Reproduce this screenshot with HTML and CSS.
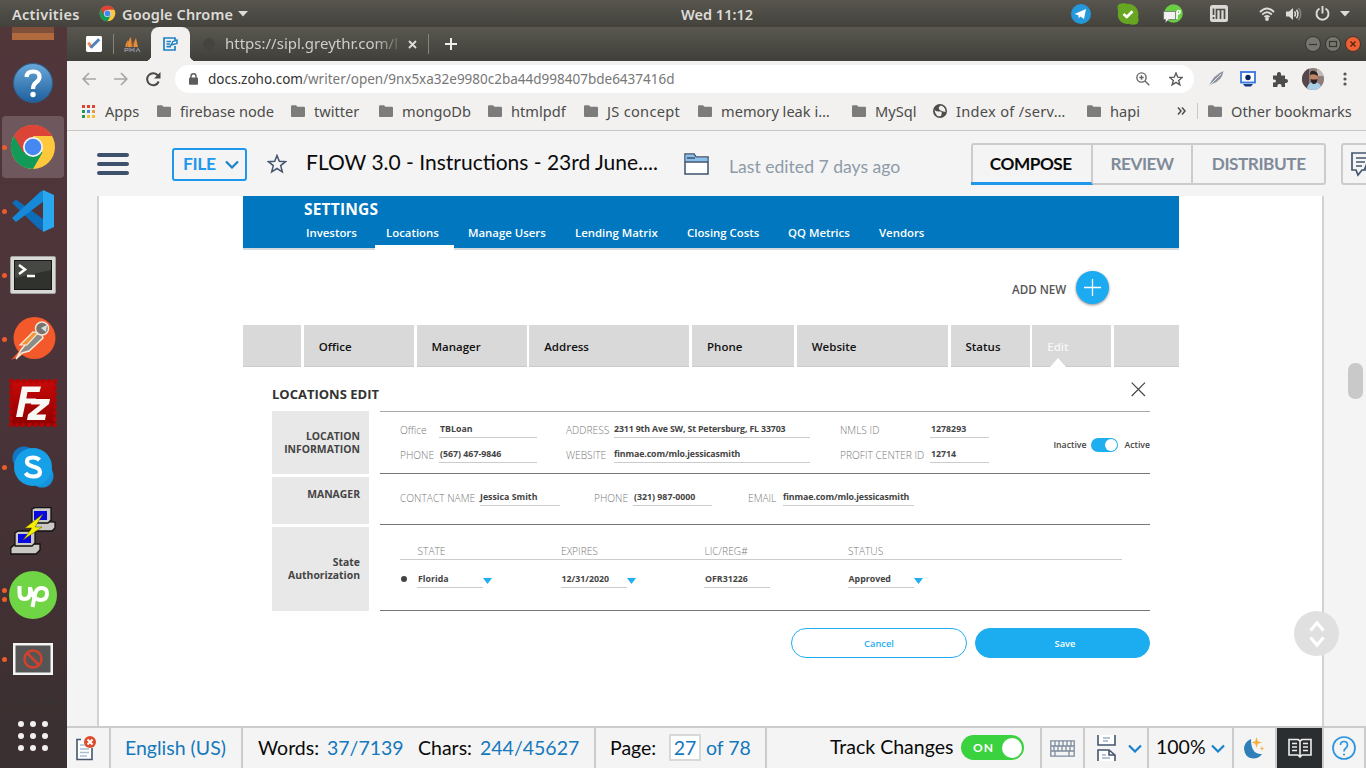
FILE: index.html
```html
<!DOCTYPE html>
<html lang="en">
<head>
<meta charset="utf-8">
<title>FLOW 3.0 - Instructions</title>
<link rel="stylesheet" href="styles.css">
</head>
<body>
<svg class="defs" width="0" height="0">
  <symbol id="folder" viewBox="0 0 14 12"><path d="M0 1.5Q0 .3 1.2.3H5L6.5 1.8H13Q14 1.8 14 2.8V11Q14 12 13 12H1Q0 12 0 11Z" fill="#7c7c7a"/></symbol>
  <symbol id="chev" viewBox="0 0 14 9"><path d="M1 1.5 7 7.5 13 1.5" fill="none" stroke="#1b82c9" stroke-width="2.2"/></symbol>
  <symbol id="chrome" viewBox="0 0 48 48">
    <circle cx="24" cy="24" r="22" fill="#fdc83b"/>
    <path d="M24 24 4.9 13A22 22 0 0 1 43.1 13H24Z" fill="#dc4437"/>
    <path d="M24 24 4.9 13A22 22 0 0 0 24 46L33.5 29.5Z" fill="#129b58"/>
    <path d="M4.9 13 14.5 29.5 24 13H43.1A22 22 0 0 0 4.9 13Z" fill="#dc4437"/>
    <circle cx="24" cy="24" r="10" fill="#f4f4f4"/><circle cx="24" cy="24" r="8.3" fill="#4688f1"/>
  </symbol>
</svg>

<header class="topbar">
  <span class="top-activities">Activities</span>
  <svg class="top-chrome" width="17" height="17"><use href="#chrome"/></svg>
  <span class="top-app">Google Chrome</span>
  <svg class="top-caret" width="10" height="6"><path d="M0 0H10L5 5.5Z" fill="#dedcd8"/></svg>
  <span class="top-clock">Wed 11:12</span>
  <div class="tray">
    <svg width="20" height="20" viewBox="0 0 20 20"><circle cx="10" cy="10" r="10" fill="#2598dc"/><path d="M3.5 10 15 5 13 15 9.5 12.6 7.7 14.2 7.4 11.2Z" fill="#fff"/></svg>
    <svg width="22" height="22" viewBox="0 0 22 22"><path d="M4 .5Q0 1 .6 6 1.5 8 .8 11.500C.8 18 7 22 12 20.800Q15 22.500 20 21 22.500 18 21 14C23 8 18 0 11 1Q8 0 4 .5Z" fill="#67a621"/><path d="M6.500 11 9.800 14 15.500 8.200" fill="none" stroke="#fff" stroke-width="2.700"/></svg>
    <svg width="20" height="20" viewBox="0 0 20 20"><circle cx="10.500" cy="9.500" r="9.300" fill="#6ace44"/><path d="M14 15V8Q15 5.500 17 7 17.500 10 14.500 10" fill="none" stroke="#fff" stroke-width="1.600"/><path d="M.6 7.500H12.500V15.500H6L2.500 18.500V15.500H.6Z" fill="#f1f1ef" stroke="#666" stroke-width=".7"/></svg>
    <svg width="18" height="17" viewBox="0 0 18 17"><rect width="18" height="17" rx="2.500" fill="#dbd9d5"/><path d="M3.500 3.500V10M3.500 12V14M6.500 14V4.500H14.500V14M10.500 4.500V14" fill="none" stroke="#4d4b46" stroke-width="1.700"/></svg>
    <svg width="16" height="14" viewBox="0 0 16 14"><g fill="none" stroke="#dedcd8" stroke-width="1.900"><path d="M1 5Q8-2 15 5"/><path d="M3.200 7.600Q8 3 12.800 7.600"/><path d="M5.500 10Q8 7.800 10.500 10"/></g><circle cx="8" cy="12" r="1.900" fill="#dedcd8"/></svg>
    <svg width="16" height="14" viewBox="0 0 16 14"><path d="M0 4.500H3L7 1V13L3 9.500H0Z" fill="#dedcd8"/><g fill="none" stroke="#dedcd8" stroke-width="1.500"><path d="M8.500 4.500Q10.500 7 8.500 9.500"/><path d="M10.500 2.700Q13.500 7 10.500 11.300"/><path d="M12.500 1Q17 7 12.500 13" stroke="#85837d"/></g></svg>
    <svg width="15" height="15" viewBox="0 0 15 15"><path d="M4.500 2.500A6 6 0 1 0 10.500 2.500M7.500 0V7.500" fill="none" stroke="#dedcd8" stroke-width="1.900"/></svg>
    <svg width="10" height="6"><path d="M0 0H10L5 5.500Z" fill="#dedcd8"/></svg>
  </div>
</header>

<div class="desktop">
<nav class="dock">
  <div class="dock-cut"></div>
  <div class="dock-item"><svg width="42" height="42" viewBox="0 0 42 42"><defs><linearGradient id="hg" x2="0" y2="1"><stop stop-color="#6aa8d8"/><stop offset="1" stop-color="#1d5f9e"/></linearGradient></defs><circle cx="21" cy="21" r="19.500" fill="url(#hg)" stroke="#2a618f"/><path d="M14.500 15Q15 9.500 21 9.500 27.500 9.500 27.500 15 27.500 18 24 20.500 21 22.500 21 27" fill="none" stroke="#fff" stroke-width="4.200"/><circle cx="21" cy="32.500" r="2.700" fill="#fff"/></svg></div>
  <div class="dock-item active run"><svg width="48" height="48"><use href="#chrome"/></svg></div>
  <div class="dock-item run"><svg width="42" height="42" viewBox="0 0 42 42"><path d="M0 13 4 9.500 31 29V41L26 38Z" fill="#0e6db8"/><path d="M0 28 4 32 32 11V0L28 2Z" fill="#1689d8"/><path d="M31 0 42 5V37L31 42Z" fill="#2aa7ee"/></svg></div>
  <div class="dock-item run"><svg width="46" height="38" viewBox="0 0 46 38"><rect x=".5" y=".5" width="45" height="37" rx="1.500" fill="#d9d9d7" stroke="#a2a2a0"/><rect x="4.500" y="4.500" width="37" height="29" fill="#30322e" stroke="#161716"/><path d="M5 5H41V14L5 22Z" fill="#454843"/><path d="M9 9 15 13.500 9 18M17 20H25" fill="none" stroke="#fff" stroke-width="2.600"/></svg></div>
  <div class="dock-item run"><svg width="46" height="46" viewBox="0 0 46 46"><circle cx="24.500" cy="22" r="21" fill="#f4592b"/><path d="M1 44 11 33 15 38Z" fill="#f4592b"/><path d="M6 43 11 34 25 17 32 19 33 22 19 35 12 37Z" fill="#8d8b86" stroke="#f6e9d9" stroke-width="1.500"/><path d="M10 29 23 16 28 17 17 29Z" fill="#f29438" stroke="#f6e9d9" stroke-width="1.200"/><circle cx="32" cy="12.500" r="6.500" fill="#77736f" stroke="#eee3d4" stroke-width="1.500"/><path d="M31 12 37 9 36 16Z" fill="#ddd"/></svg></div>
  <div class="dock-item"><svg width="48" height="48" viewBox="0 0 48 48"><defs><linearGradient id="fz" x2="0" y2="1"><stop stop-color="#c80909"/><stop offset="1" stop-color="#8f0000"/></linearGradient></defs><rect x="1.500" y="1.500" width="45" height="45" fill="url(#fz)"/><rect x="2" y="2" width="44" height="44" fill="none" stroke="#b20505" stroke-width="4" stroke-linecap="round" stroke-dasharray="1 5.285"/><path d="M7 38 13 7.500H32L30.500 13H18.500L17.300 19.500H27L26 24.500H16.300L13.500 38ZM23 20H41L40 25 27 35.500H37L36 41H18L19 35.500 31.500 25.500H22Z" fill="#f8f8f5"/></svg></div>
  <div class="dock-item run"><svg width="42" height="42" viewBox="0 0 42 42"><circle cx="12" cy="12" r="11.500" fill="#1175c4"/><circle cx="30" cy="30" r="11.500" fill="#1693dc"/><circle cx="21" cy="21" r="19" fill="#16a0e8"/><path d="M27.500 14Q25 11.500 21 11.500 15 11.500 15 15.800 15 19 21 20.500 28 22 28 26 28 30.500 21.500 30.500 16 30.500 13.500 27" fill="none" stroke="#fff" stroke-width="4.200"/></svg></div>
  <div class="dock-item"><svg width="46" height="48" viewBox="0 0 46 48"><g fill="#c9c8c4" stroke="#111" stroke-width="1.300"><path d="M21 18 25 14 45 15V21L42 24H20Z"/><path d="M22 2 25 .7H41V13L38 16H22Z"/><path d="M.8 41 5 37 30 37 30 43 26 47H.8Z"/><path d="M5 26 8 24H25V36L22 39H5Z"/></g><rect x="24" y="4" width="13" height="9" fill="#0808e0"/><rect x="8" y="27" width="13" height="9" fill="#0808e0"/><path d="M33 7 15 21H22L13 33 32 20H25Z" fill="#f4f000" stroke="#555500" stroke-width=".5"/></svg></div>
  <div class="dock-item run two"><svg width="48" height="48" viewBox="0 0 48 48"><circle cx="24" cy="24" r="24" fill="#6fd544"/><path d="M10.500 15V22Q10.500 28 15.500 28 21 28 21 21V16M21 16Q23 28 31 29 38 29 38 22.500 38 17 32.500 17 27 17 26 24L23.500 36" fill="none" stroke="#fff" stroke-width="4"/></svg></div>
  <div class="dock-item run"><svg width="40" height="32" viewBox="0 0 40 32"><rect width="40" height="32" fill="#f4f4f4"/><rect x="2.500" y="2.500" width="35" height="27" fill="#555"/><circle cx="20" cy="16" r="8.500" fill="none" stroke="#d3402b" stroke-width="2.500"/><path d="M14 10 26 22" stroke="#d3402b" stroke-width="2.500"/></svg></div>
  <div class="dock-sep"></div>
  <div class="dock-grid"><i></i><i></i><i></i><i></i><i></i><i></i><i></i><i></i><i></i></div>
</nav>

<main class="window">
  <div class="tabs">
    <svg class="tab-pin" width="16" height="16" viewBox="0 0 17 17"><rect width="17" height="17" rx="1.500" fill="#fff"/><path d="M2.500 7 6 12" stroke="#ef8a55" stroke-width="3.200"/><path d="M5 12.500 14 3.500" stroke="#5282b8" stroke-width="3.200"/></svg>
    <i class="tab-line"></i>
    <svg class="tab-pma" width="17" height="17" viewBox="0 0 17 17"><path d="M7 1Q3 5 4 11L8 11ZM12 2Q9 7 10 11H14ZM4 4Q1 8 1.500 11H3.500ZM9 4 9.500 11H8.500Z" fill="#e98b35"/><path d="M1 16V12.500H4V14.500H1M6 16V12.500L8 14.500 10 12.500V16M12 16 14 12.500 16 16" fill="none" stroke="#8a8c96" stroke-width="1.200"/></svg>
    <div class="tab-active"><svg width="15" height="14" viewBox="0 0 15 14"><path d="M12 9V13H1V1H12V3M3.500 4.500H8M3.500 7H7M3.500 9.700H8" fill="none" stroke="#2082c4" stroke-width="1.700"/><path d="M8 8 10 4.500 14 3 14 6.500 10 7.500Z" fill="#fff" stroke="#2082c4" stroke-width="1.500"/></svg></div>
    <i class="tab-ghost"></i>
    <span class="tab-title">https://sipl.greythr.com/l</span>
    <svg class="tab-x" width="9" height="9"><path d="M1 1 8 8M8 1 1 8" stroke="#dddbd7" stroke-width="1.900"/></svg>
    <i class="tab-line"></i>
    <svg class="tab-plus" width="12" height="12"><path d="M6 0V12M0 6H12" stroke="#efeeec" stroke-width="2"/></svg>
    <div class="win-btns">
      <svg width="16" height="16"><circle cx="8" cy="8" r="7.500" fill="#777670" stroke="#37362f"/><path d="M4 8.500H12" stroke="#37362f" stroke-width="1.200"/></svg>
      <svg width="16" height="16"><circle cx="8" cy="8" r="7.500" fill="#777670" stroke="#37362f"/><rect x="4.500" y="5.500" width="7" height="5" fill="none" stroke="#37362f" stroke-width="1.200"/></svg>
      <svg width="16" height="16"><circle cx="8" cy="8" r="7.500" fill="#ee6033" stroke="#493129"/><path d="M5.500 5.500 10.500 10.500M10.500 5.500 5.500 10.500" stroke="#542512" stroke-width="1.400"/></svg>
    </div>
  </div>

  <div class="toolbar">
    <svg class="nav-ico" width="14" height="14"><path d="M14 7H1.500M7 1 1.200 7 7 13" fill="none" stroke="#a6a6a4" stroke-width="1.700"/></svg>
    <svg class="nav-ico" width="14" height="14"><path d="M0 7H12.500M7 1 12.800 7 7 13" fill="none" stroke="#a6a6a4" stroke-width="1.700"/></svg>
    <svg class="nav-ico" width="15" height="15" viewBox="0 0 15 15"><path d="M12.700 9.500A6 6 0 1 1 12 3.700" fill="none" stroke="#494946" stroke-width="2"/><path d="M14.500 0V6.500H8Z" fill="#494946"/></svg>
    <div class="omnibox">
      <svg width="9" height="12" viewBox="0 0 9 12"><rect y="4.500" width="9" height="7.300" rx="1" fill="#5c5c5a"/><path d="M2 5V3Q2 .8 4.500.8T7 3V5" fill="none" stroke="#5c5c5a" stroke-width="1.400"/></svg>
      <span class="url"><b>docs.zoho.com</b>/writer/open/9nx5xa32e9980c2ba44d998407bde6437416d</span>
      <svg width="14" height="14" viewBox="0 0 14 14"><g fill="none" stroke="#666" stroke-width="1.400"><circle cx="5.500" cy="5.500" r="4.600"/><path d="M9 9 13.300 13.300M3.300 5.500H7.700M5.500 3.300V7.700"/></g></svg>
      <svg class="omni-star" width="14" height="14" viewBox="0 0 14 14"><path d="M7 1 8.700 5.200 13.200 5.500 9.700 8.400 10.900 12.900 7 10.400 3.100 12.900 4.300 8.400.8 5.500 5.300 5.200Z" fill="none" stroke="#5c5c5a" stroke-width="1.400"/></svg>
    </div>
    <svg class="ext1" width="15" height="16" viewBox="0 0 15 16"><path d="M0 15Q4 4 14.500 0 13 10 3 13Z" fill="#8e949f"/><path d="M0 15 12 3" stroke="#e4e5e8"/></svg>
    <svg class="ext2" width="16" height="16" viewBox="0 0 16 16"><rect x="1" y="1" width="14" height="10.500" fill="#fff" stroke="#3676df" stroke-width="1.800"/><circle cx="8" cy="6.500" r="2.700" fill="#0b2465"/><path d="M3 13H13L11 15.500H5Z" fill="#173a87"/></svg>
    <svg class="ext3" width="15" height="15" viewBox="0 0 15 15"><path d="M0 3.500H4Q3.500 0 6 0T8 3.500H12V7Q15 6.500 15 9T12 11V15H8.500Q9 12 6.500 12T4.500 15H0V10.500Q3 11 3 9T0 7.500Z" fill="#4c4c49"/></svg>
    <svg class="avatar" width="22" height="22" viewBox="0 0 22 22"><clipPath id="av"><circle cx="11" cy="11" r="11"/></clipPath><g clip-path="url(#av)"><rect width="22" height="22" fill="#8e7d78"/><rect width="7" height="22" fill="#55474b"/><rect x="15" width="7" height="8" fill="#c0bab8"/><path d="M5 22Q5 14 12 14T20 22Z" fill="#a9cfe6"/><ellipse cx="12" cy="9.500" rx="4" ry="5.500" fill="#be8464"/><path d="M8 7Q8 2 12 3T16 8Q12 5 8 7M8.500 11Q12 12 15.500 11 15 16 12 16T8.500 11" fill="#292325"/></g></svg>
    <svg class="kebab" width="4" height="14"><circle cx="2" cy="2" r="1.600" fill="#555"/><circle cx="2" cy="7" r="1.600" fill="#555"/><circle cx="2" cy="12" r="1.600" fill="#555"/></svg>
  </div>

  <div class="bookmarks">
    <div class="bm apps"><div class="apps-grid"><i></i><i></i><i></i><i></i><i></i><i></i><i></i><i></i><i></i></div><span>Apps</span></div>
    <div class="bm"><svg width="14" height="12"><use href="#folder"/></svg><span>firebase node</span></div>
    <div class="bm"><svg width="14" height="12"><use href="#folder"/></svg><span>twitter</span></div>
    <div class="bm"><svg width="14" height="12"><use href="#folder"/></svg><span>mongoDb</span></div>
    <div class="bm"><svg width="14" height="12"><use href="#folder"/></svg><span>htmlpdf</span></div>
    <div class="bm"><svg width="14" height="12"><use href="#folder"/></svg><span class="js">JS concept</span></div>
    <div class="bm"><svg width="14" height="12"><use href="#folder"/></svg><span>memory leak i…</span></div>
    <div class="bm"><svg width="14" height="12"><use href="#folder"/></svg><span>MySql</span></div>
    <div class="bm"><svg width="14" height="14" viewBox="0 0 14 14"><circle cx="7" cy="7" r="7" fill="#4d4d4a"/><path d="M1.500 6Q4 8 7 7.500T8 12Q4 13 2.500 9.500ZM8 1.500Q5 3 6 5T12.500 8Q12.500 4 10 2.500Z" fill="#f1f0ee"/></svg><span class="js">Index of /serv…</span></div>
    <div class="bm"><svg width="14" height="12"><use href="#folder"/></svg><span>hapi</span></div>
    <svg width="9" height="8"><path d="M1 .5 4 4 1 7.500M5 .5 8 4 5 7.500" fill="none" stroke="#4d4d4a" stroke-width="1.500"/></svg>
    <i class="bm-line"></i>
    <div class="bm"><svg width="14" height="12"><use href="#folder"/></svg><span>Other bookmarks</span></div>
  </div>

  <div class="writer-head">
    <div class="burger"><i></i><i></i><i></i></div>
    <div class="file-btn"><span>FILE</span><svg width="14" height="9"><use href="#chev"/></svg></div>
    <svg class="fav" width="20" height="20" viewBox="0 0 20 20"><path d="M10 1.500 12.300 7.300 18.500 7.700 13.700 11.600 15.300 17.900 10 14.500 4.700 17.900 6.300 11.600 1.500 7.700 7.700 7.300Z" fill="none" stroke="#44566f" stroke-width="1.500"/></svg>
    <span class="doc-title">FLOW 3.0 - Instructions - 23rd June....</span>
    <svg class="doc-folder" width="25" height="22" viewBox="0 0 25 22"><path d="M1 21V1H10L12 4H24V21Z" fill="#fff" stroke="#3c526d" stroke-width="1.500"/><path d="M1.700 1.700H9.700L11.700 4.700H23.300V8.500H1.700Z" fill="#88bfec"/><path d="M1 9H24M3 5H11" stroke="#3c526d" stroke-width="1.300"/></svg>
    <span class="edited">Last edited 7 days ago</span>
    <div class="modes"><span class="mode current">COMPOSE</span><span class="mode">REVIEW</span><span class="mode">DISTRIBUTE</span></div>
    <div class="comment-btn"><svg width="26" height="26" viewBox="0 0 26 26"><path d="M1 1H24V18H11L7 23 5 18H1ZM5 6H16M5 10H14M5 14H11" fill="none" stroke="#44566f" stroke-width="1.700"/><path d="M12 19 16 9 22 12Z" fill="#44566f"/></svg></div>
  </div>

  <div class="canvas">
    <div class="page">
      <div class="mock">
        <div class="m-head">
          <div class="m-title">SETTINGS</div>
          <div class="m-nav"><span>Investors</span><span class="cur">Locations</span><span>Manage Users</span><span>Lending Matrix</span><span>Closing Costs</span><span>QQ Metrics</span><span>Vendors</span></div>
        </div>
        <div class="m-add"><span>ADD NEW</span><div class="plus"><svg width="17" height="17"><path d="M8.500 0V17M0 8.500H17" stroke="#fff" stroke-width="1.300"/></svg></div></div>
        <div class="m-cols"><span></span><span>Office</span><span>Manager</span><span>Address</span><span>Phone</span><span>Website</span><span>Status</span><span class="edit">Edit</span><span></span></div>
        <div class="m-edit">
          <div class="m-edit-head"><span>LOCATIONS EDIT</span><svg width="15" height="15"><path d="M.7.7 14 14M14 .7.7 14" stroke="#444" stroke-width="1.200"/></svg></div>
          <div class="sections">
            <div class="s-lab loc">LOCATION<br>INFORMATION</div>
            <div class="s-body loc">
              <div class="loc-grid">
                <label>Office</label><b>TBLoan</b><label class="c2">ADDRESS</label><b class="addr">2311 9th Ave SW, St Petersburg, FL 33703</b><label class="c3">NMLS ID</label><b>1278293</b>
                <label>PHONE</label><b>(567) 467-9846</b><label class="c2">WEBSITE</label><b class="web">finmae.com/mlo.jessicasmith</b><label class="c3 pc">PROFIT CENTER ID</label><b>12714</b>
              </div>
              <div class="toggle-row"><span>Inactive</span><div class="tg"><i></i></div><span>Active</span></div>
            </div>
            <div class="s-lab man">MANAGER</div>
            <div class="s-body man"><label class="l1">CONTACT NAME</label><b class="v1">Jessica Smith</b><label class="l2">PHONE</label><b class="v2">(321) 987-0000</b><label class="l3">EMAIL</label><b class="v3 web">finmae.com/mlo.jessicasmith</b></div>
            <div class="s-lab sta">State<br>Authorization</div>
            <div class="s-body sta">
              <div class="st-head"><label>STATE</label><label>EXPIRES</label><label>LIC/REG#</label><label>STATUS</label></div>
              <div class="st-row"><i class="dot"></i>
                <div><b>Florida</b><svg width="9" height="6"><path d="M0 0H9L4.500 6Z" fill="#1faef0"/></svg></div>
                <div><b>12/31/2020</b><svg width="9" height="6"><path d="M0 0H9L4.500 6Z" fill="#1faef0"/></svg></div>
                <div><b>OFR31226</b></div>
                <div><b>Approved</b><svg width="9" height="6"><path d="M0 0H9L4.500 6Z" fill="#1faef0"/></svg></div>
              </div>
            </div>
          </div>
          <div class="btns"><span class="cancel">Cancel</span><span class="save">Save</span></div>
        </div>
      </div>
    </div>
    <div class="thumb"></div>
    <div class="jump"><svg width="18" height="28" viewBox="0 0 18 28"><path d="M2.500 10.500 9 3 15.500 10.500M2.500 17.500 9 25 15.500 17.500" fill="none" stroke="#fff" stroke-width="3.200"/></svg></div>
  </div>

  <div class="status">
    <div class="c-note"><svg width="22" height="25" viewBox="0 0 22 25"><path d="M6 3.500H2V23.500H17V12" fill="#fff" stroke="#44566f" stroke-width="1.600"/><path d="M5 9H11M5 13H14M5 16.500H14M5 20H12" stroke="#a8bdd0" stroke-width="1.300"/><circle cx="15" cy="6" r="6" fill="#dd4a2c"/><path d="M12.500 3.500 17.500 8.500M17.500 3.500 12.500 8.500" stroke="#fff" stroke-width="2"/></svg></div>
    <div class="c-lang">English (US)</div>
    <div class="c-words"><span class="w1">Words:</span><em class="w2">37/7139</em><span class="w3">Chars:</span><em>244/45627</em></div>
    <div class="c-page"><span class="p1">Page:</span><em class="pbox">27</em><em>of 78</em></div>
    <div class="c-track"><span>Track Changes</span><div class="switch-on"><b>ON</b><i></i></div></div>
    <div class="c-key"><svg width="25" height="17" viewBox="0 0 25 17"><path d="M.8.800H24.200V16.200H.8ZM.8 6H24.200M.8 11H24.200M5 1V6M9 1V6M13 1V6M17 1V6M21 1V6M4 6V11M8 6V11M12 6V11M16 6V11M20 6V11M5 11V16M19 11V16" fill="none" stroke="#7d8b9b" stroke-width="1.300"/></svg></div>
    <div class="c-brk"><svg width="19" height="26" viewBox="0 0 19 26"><path d="M1 0V10H18V0M1 26V15H12L18 20V26M12 15V20H18" fill="#fff" stroke="#44566f" stroke-width="1.600"/><path d="M6 3H13M6 6H11M5 20H9M5 23H13" stroke="#9fb2c6" stroke-width="1.300"/></svg><svg width="14" height="9"><use href="#chev"/></svg></div>
    <div class="c-zoom"><span>100%</span><svg width="14" height="9"><use href="#chev"/></svg></div>
    <div class="c-moon"><svg width="22" height="24" viewBox="0 0 22 24"><path d="M8 3Q1 6 1 13 2 22 10 22.500 16 22.500 19 18 8 19 8 3Z" fill="#2f80b8"/><path d="M13.500 1 14.700 5.300 19 6.500 14.700 7.700 13.500 12 12.300 7.700 8.500 6.500 12.300 5.300ZM19 10 19.600 11.900 21.500 12.500 19.600 13.100 19 15 18.400 13.100 16.500 12.500 18.400 11.900Z" fill="#f6ac38"/></svg></div>
    <div class="c-book"><svg width="24" height="20" viewBox="0 0 24 20"><path d="M1 1.500H10L12 3 14 1.500H23V17H14L12 19 10 17H1ZM12 3V19M4 5.500H9M4 9H9M4 12.500H9M15 5.500H20M15 9H20M15 12.500H20" fill="none" stroke="#eee" stroke-width="1.600"/></svg></div>
    <div class="c-help"><svg width="24" height="24" viewBox="0 0 24 24"><circle cx="12" cy="12" r="11" fill="none" stroke="#2b94e2" stroke-width="1.700"/><path d="M8.500 9Q8.500 5.500 12 5.500T15.500 9Q15.500 11 13.500 12.500 12 13.500 12 15.500" fill="none" stroke="#2b94e2" stroke-width="1.700"/><circle cx="12" cy="18.500" r="1.100" fill="#2b94e2"/></svg></div>
  </div>
</main>
</div>
</body>
</html>
```

FILE: styles.css
```css
* { box-sizing: border-box; }
body { margin: 0; width: 1366px; height: 768px; overflow: hidden; font-family: "Noto Sans", sans-serif; white-space: nowrap; }
svg { display: block; flex: none; }
.defs { position: absolute; }
i { display: block; flex: none; }
em { font-style: normal; }

/* system bar */
.topbar { height: 27px; display: flex; align-items: center; background: linear-gradient(#57554e, #43423c); color: #dedcd8; font-size: 14.5px; font-weight: 600; padding-left: 12px; }
.top-activities { width: 87px; letter-spacing: .3px; }
.top-chrome { margin-right: 6px; }
.top-app { width: 116px; letter-spacing: .1px; }
.top-caret { margin-right: 433px; }
.top-clock { width: 390px; }
.tray { display: flex; align-items: center; }
.tray svg { margin-right: 26px; }
.tray svg:nth-child(2) { margin-right: 24px; }
.tray svg:nth-child(3) { margin-right: 27px; }
.tray svg:nth-child(4) { margin-right: 31px; }
.tray svg:nth-child(5) { margin-right: 11px; }
.tray svg:nth-child(6) { margin-right: 13px; }
.tray svg:nth-child(7) { margin-right: 10px; }
.tray svg:nth-child(8) { margin-right: 0; }
.desktop { display: flex; height: 741px; }

/* launcher */
.dock { width: 67px; background: linear-gradient(#51363a, #4a3439 50%, #3f3032 85%, #393031); display: flex; flex-direction: column; }
.dock-cut { width: 42px; height: 13px; margin: 0 0 11px 12px; background: linear-gradient(#81503b 50%, #b16a3e 50%); }
.dock-item { height: 62px; margin: 1px 3px 1px 2px; border-radius: 4px; display: flex; align-items: center; justify-content: center; position: relative; flex: none; }
.dock-item.active { background: #6f585d; }
.dock-item.run::before { content: ""; position: absolute; left: 0; top: 29px; width: 5px; height: 5px; border-radius: 50%; background: #ee5b2b; }
.dock-item.two::before { top: 24px; }
.dock-item.two::after { content: ""; position: absolute; left: 0; top: 33px; width: 5px; height: 5px; border-radius: 50%; background: #ee5b2b; }
.dock-sep { margin: 10px 12px 18px; height: 2px; background: #353233; }
.dock-grid { display: grid; grid-template-columns: repeat(3, 6px); gap: 6px; margin-left: 18px; }
.dock-grid i { width: 6px; height: 6px; border-radius: 50%; background: #f3f1f0; }

/* browser chrome */
.window { width: 1299px; display: flex; flex-direction: column; background: #f4f4f4; }
.tabs { height: 34px; flex: none; display: flex; align-items: center; background: linear-gradient(#595750, #403f39); padding-left: 19px; }
.tab-line { width: 1px; height: 20px; background: #85837d; }
.tab-pin { margin-right: 11px; }
.tab-pma { margin: 0 10px 0 10px; }
.tab-active { width: 39px; height: 34px; border-radius: 8px 8px 0 0; background: #f2f1f0; display: flex; align-items: center; justify-content: center; position: relative; }
.tab-active::before, .tab-active::after { content: ""; position: absolute; bottom: 0; width: 6px; height: 6px; }
.tab-active::before { left: -6px; background: radial-gradient(circle at 0 0, transparent 6px, #f2f1f0 6.5px); }
.tab-active::after { right: -6px; background: radial-gradient(circle at 100% 0, transparent 6px, #f2f1f0 6.5px); }
.tab-ghost { width: 12px; height: 12px; border-radius: 50%; background: #45443f; margin: 0 10px 0 13px; }
.tab-title { width: 175px; margin-right: 8px; font-size: 15px; padding-bottom: 2px; color: #cfcdc9; -webkit-mask-image: linear-gradient(90deg, #000 85%, rgba(0,0,0,.15)); }
.tab-x { margin-right: 11px; }
.tab-plus { margin-left: 16px; }
.win-btns { display: flex; gap: 4px; margin-left: auto; padding-right: 5px; }
.toolbar { height: 37px; flex: none; display: flex; align-items: center; background: #f2f1f0; padding: 0 0 1px 15px; }
.nav-ico { margin-right: 18px; }
.nav-ico:nth-child(3) { margin-right: 14px; }
.omnibox { width: 1019px; height: 28px; border-radius: 14px; background: #fff; display: flex; align-items: center; padding-left: 14px; }
.url { font-size: 13.5px; color: #777; margin-left: 10px; width: 928px; padding-bottom: 1px; }
.url b { font-weight: 400; color: #333; }
.omni-star { margin-left: 19px; }
.ext1 { margin-left: 15px; }
.ext2 { margin-left: 16px; }
.ext3 { margin-left: 17px; }
.avatar { margin-left: 14px; }
.kebab { margin-left: 19px; }
.bookmarks { height: 33px; flex: none; display: grid; grid-template-columns: 75px 134px 88px 109px 96px 114px 154px 81px 154px 90px 20px 11px auto; align-items: center; background: #f2f1f0; border-bottom: 1px solid #c9c8c7; padding: 0 0 6px 15px; }
.bm { display: flex; align-items: center; gap: 9px; font-size: 14.6px; color: #4c4c4a; }
.bm span { padding-bottom: 1px; }
.js { letter-spacing: .3px; }
.bm-line { width: 1px; height: 16px; background: #c8c8c6; }
.apps-grid { display: grid; grid-template-columns: repeat(3, 3px); gap: 2px; width: 14px; }
.apps-grid i { width: 3px; height: 3px; background: #e0442f; }
.apps-grid i:nth-child(4), .apps-grid i:nth-child(7) { background: #1c9b57; }
.apps-grid i:nth-child(5) { background: #4285f4; }
.apps-grid i:nth-child(6) { background: #ea9a3b; }
.apps-grid i:nth-child(8), .apps-grid i:nth-child(9) { background: #f3bf35; }

/* writer header */
.writer-head { height: 65px; flex: none; display: flex; align-items: center; font-family: Lato, sans-serif; padding: 1px 0 0 30px; overflow: hidden; }
.writer-head > * { flex: none; }
.burger { width: 32px; margin-right: 43px; }
.burger i { height: 4px; border-radius: 2px; background: #3e516c; }
.burger i + i { margin-top: 5px; }
.file-btn { width: 75px; height: 33px; border: 2px solid #1f97ea; border-radius: 3px; display: flex; align-items: center; padding-left: 9px; color: #1f97ea; font-size: 17.5px; font-weight: 700; }
.file-btn span { width: 42px; letter-spacing: -.4px; padding-bottom: 1px; }
.fav { margin: 0 19px 0 20px; }
.doc-title { width: 378px; font-size: 21px; padding-bottom: 5px; color: #0b0b0b; }
.doc-folder { margin-right: 20px; }
.edited { width: 242px; font-size: 17.6px; color: #8e9ba8; padding-top: 5px; }
.modes { display: flex; width: 355px; height: 42px; border: 2px solid #ccc; border-radius: 3px; }
.mode { width: 101px; text-align: center; line-height: 37px; font-size: 17.2px; font-weight: 700; color: #7f8b99; border-right: 2px solid #ccc; letter-spacing: -.45px; }
.mode.current { width: 122px; height: 40px; color: #0a0a0a; border-bottom: 3px solid #1f97ea; margin-left: -2px; }
.mode:last-child { width: 131px; border: 0; }
.comment-btn { width: 50px; height: 42px; margin-left: 15px; border: 2px solid #ccc; border-radius: 3px; padding: 7px 0 0 8px; }

/* document */
.canvas { height: 530px; flex: none; position: relative; padding-left: 30px; font-family: "Open Sans", sans-serif; overflow: hidden; }
.page { width: 1227px; height: 530px; background: #fff; border: solid #d2d2d2; border-width: 0 2px; padding-left: 144px; }
.mock { width: 936px; color: #444; }
.m-head { height: 54px; background: #0077be; border-bottom: 2px solid #d5dade; color: #fff; padding-left: 61px; }
.m-title { font-size: 15.5px; font-weight: 700; line-height: 27px; height: 26px; letter-spacing: .2px; }
.m-nav { display: grid; grid-template-columns: 71px 91px 107px 112px 101px 91px auto; font-size: 11.4px; font-weight: 600; line-height: 22px; padding-left: 2px; }
.m-nav span { height: 28px; }
.m-nav .cur { border-bottom: 5px solid #fff; width: 79px; padding-left: 11px; margin-left: -2px; }
.m-add { height: 75px; display: flex; align-items: center; padding-left: 769px; font-size: 11.6px; font-weight: 600; color: #555; }
.m-add span { width: 64px; padding-top: 3px; }
.plus { width: 33px; height: 33px; border-radius: 50%; background: #1cabf0; box-shadow: 0 1px 3px #888; display: flex; align-items: center; justify-content: center; }
.m-cols { display: grid; grid-template-columns: 58px 110px 110px 160px 102px 151px 79px 79px 65px; gap: 2.75px; height: 42px; font-size: 11.5px; font-weight: 600; color: #111; line-height: 44px; }
.m-cols span { background: #d9d9d9; padding-left: 15px; border-bottom: 1px solid #cbcbcb; height: 42px; }
.m-cols .edit { color: #f6f6f6; position: relative; }
.edit::after { content: ""; position: absolute; left: 18px; bottom: -1px; border: solid transparent; border-width: 0 8px 9px; border-bottom-color: #fff; }
.m-edit { padding: 0 29px; }
.m-edit-head { height: 44px; display: flex; justify-content: space-between; align-items: center; font-size: 13px; font-weight: 700; color: #333; padding: 9px 4px 0 0; }
.m-edit-head svg { margin-top: -9px; }
.sections { display: grid; grid-template-columns: 97px 770px; column-gap: 11px; grid-template-rows: 66px 50px 84px; }
.s-lab { background: #e8e8e8; text-align: right; font-size: 10.4px; font-weight: 700; line-height: 13px; padding-right: 9px; }
.s-lab.loc { height: 63px; padding-top: 19px; }
.s-lab.man { height: 47px; padding-top: 11px; }
.s-lab.sta { height: 84px; padding-top: 29px; }
.s-body { border-bottom: 1px solid #777; padding-left: 20px; }
.s-body.loc { border-top: 1px solid #aaa; height: 63px; display: flex; }
label { font-size: 10.2px; font-weight: 300; color: #777; line-height: 14px; }
.s-body b { font-size: 8.8px; font-weight: 700; color: #444; line-height: 14px; border-bottom: 1px solid #ccc; }
.s-body .addr { letter-spacing: -.15px; }
.s-body .web { letter-spacing: -.12px; }
.loc-grid { display: grid; grid-template-columns: 39px 98px 77px 196px 120px 59px; grid-template-rows: 25px 25px; padding-top: 10px; width: 654px; }
.loc-grid b { height: 16px; padding-left: 1px; }
.loc-grid b.addr, .loc-grid b.web { padding-left: 0; }
.loc-grid label { padding-top: 1px; }
.loc-grid .c2 { padding-left: 29px; }
.loc-grid .c3 { padding-left: 30px; }
.toggle-row { display: flex; align-items: center; font-size: 8.7px; font-weight: 600; padding-top: 5px; }
.toggle-row span:first-child { width: 38px; }
.tg { width: 27px; height: 14px; border-radius: 7px; background: #1faef0; display: flex; justify-content: flex-end; align-items: center; padding-right: 1px; margin-right: 6px; }
.tg i { width: 12px; height: 12px; border-radius: 50%; background: #fff; }
.s-body.man { height: 48px; display: flex; padding-top: 13px; }
.man b { height: 16px; }
.man label { padding-top: 1px; }
.l1 { width: 80px; } .v1 { width: 80px; } .l2 { width: 73px; padding-left: 34px; } .v2 { width: 79px; } .l3 { width: 71px; padding-left: 36px; } .v3 { width: 131px; }
.s-body .v2 { padding-left: 1px; }
.s-body.sta { height: 84px; padding-top: 17px; }
.st-head { display: grid; grid-template-columns: 143.5px 143.5px 143.5px auto; padding-left: 17.5px; width: 722px; height: 16px; border-bottom: 1px solid #ccc; }
.st-row { display: grid; grid-template-columns: 17px 143.5px 143.5px 143.5px auto; padding-top: 12px; }
.st-row > div { display: flex; }
.st-row b { width: 66px; height: 16px; padding-left: 1px; }
.st-row svg { margin-top: 6px; }
.dot { width: 6px; height: 6px; border-radius: 50%; background: #444; margin: 4px 0 0 1px; }
.btns { display: flex; justify-content: flex-end; gap: 8px; padding-top: 17px; font-size: 9.3px; font-weight: 600; }
.btns span { width: 176px; height: 30px; border-radius: 15px; text-align: center; border: 1px solid #1faef0; line-height: 29px; color: #1faef0; }
.btns .save { width: 175px; background: #1cacf0; color: #fff; padding-left: 5px; }
.thumb { position: absolute; left: 1281px; top: 167px; width: 15px; height: 36px; border-radius: 7px; background: #c9c9c9; }
.jump { position: absolute; left: 1227px; top: 415px; width: 45px; height: 45px; border-radius: 50%; background: #e0e0e0; display: flex; align-items: center; justify-content: center; }

/* status bar */
.status { height: 42px; flex: none; display: flex; border-top: 2px solid #ccc; font-family: Lato, sans-serif; font-size: 19.5px; color: #0a0a0a; }
.status > div { display: flex; align-items: center; border-right: 2px solid #ccc; flex: none; }
.status em, .c-lang { color: #1478bd; }
.status .c-note { width: 44px; padding-left: 8px; }
.status .c-lang { width: 132px; padding-left: 14px; padding-bottom: 1px; }
.status .c-words { width: 353px; padding-left: 15px; padding-bottom: 1px; }
.w1 { width: 69px; } .w2 { width: 91px; } .w3 { width: 62px; }
.status .c-page { width: 171px; padding-left: 14px; padding-bottom: 1px; }
.p1 { width: 59px; }
.pbox { width: 32px; height: 27px; line-height: 23px; border: 2px solid #d8d8d8; background: #fff; text-align: center; margin-right: 5px; }
.status .c-track { width: 275px; padding-left: 63px; }
.c-track span { width: 131px; padding-bottom: 4px; }
.switch-on { width: 63px; height: 25px; border-radius: 13px; background: #3bd23f; display: flex; align-items: center; justify-content: space-between; padding: 0 2px 0 12px; margin-bottom: 1px; }
.switch-on b { color: #fff; font-size: 12px; letter-spacing: 1px; }
.switch-on i { width: 20px; height: 20px; border-radius: 50%; background: #fff; }
.status .c-key { width: 43px; padding-left: 8px; }
.status .c-brk { width: 64px; padding-left: 12px; gap: 12px; }
.status .c-zoom { width: 85px; padding-left: 7px; }
.c-zoom span { width: 55px; padding-bottom: 4px; }
.status .c-moon { width: 43px; padding-left: 9px; }
.status .c-book { width: 47px; background: #2b2e31; padding-left: 11px; }
.status .c-help { width: 42px; padding-left: 8px; }
```
